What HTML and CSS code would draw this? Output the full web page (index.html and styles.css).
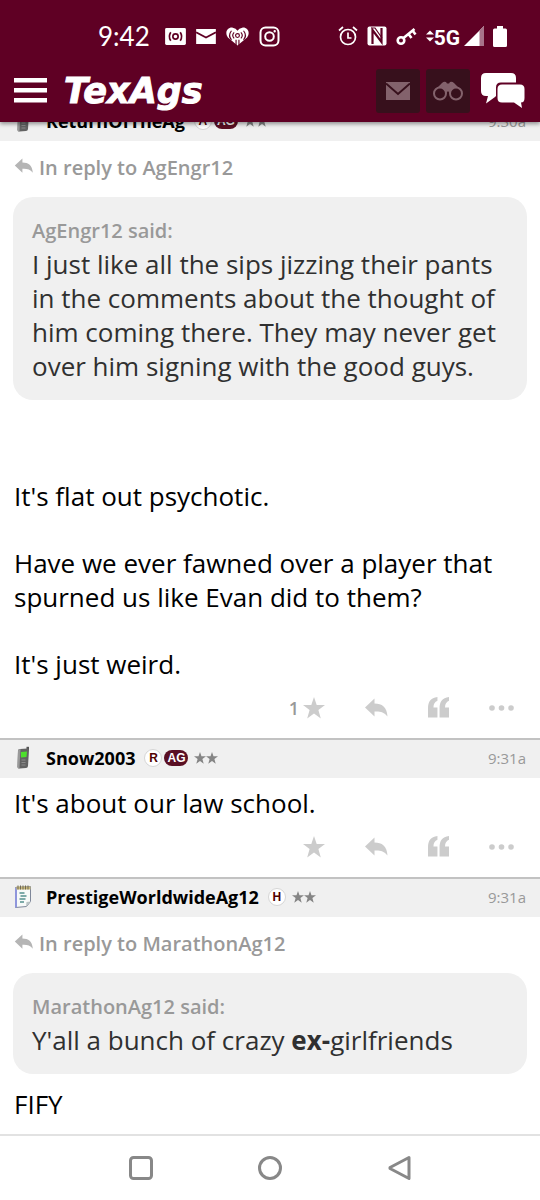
FILE: index.html
```html
<!DOCTYPE html>
<html lang="en">
<head>
<meta charset="utf-8">
<meta name="viewport" content="width=device-width, initial-scale=1">
<title>TexAgs</title>
<link rel="stylesheet" href="styles.css">
</head>
<body>
<svg class="sprite" aria-hidden="true">
  <symbol id="i-star" viewBox="0 0 22 22"><path d="M11 0l2.700 8H22l-6.600 5 2.400 8.500L11 16.500l-6.800 5L6.600 13 0 8h8.300z"/></symbol>
  <symbol id="i-reply" viewBox="0 0 23 20"><path d="M0 9.500L9.500 .5v5C17 5.500 22 9 22.500 18.500 19 14 15 13.200 9.500 13.500v5z"/></symbol>
  <symbol id="i-quote" viewBox="0 0 20 20"><path d="M9 0v3.500C6.500 4.500 5.200 6.500 5.200 10H9V19.500H0V11C0 4.500 2.500.8 9 0zM20 0v3.500c-2.500 1-3.800 3-3.800 6.500H20v9.500h-9V11C11 4.500 13.500.8 20 0z"/></symbol>
  <symbol id="i-dots" viewBox="0 0 25 6"><circle cx="3" cy="3" r="2.800"/><circle cx="12.500" cy="3" r="2.800"/><circle cx="22" cy="3" r="2.800"/></symbol>
  <symbol id="i-phone" viewBox="0 0 20 24">
    <path d="M12.500 4V.8h2.500V4z" fill="#555"/><path d="M4 4.500Q4 3 6 3l7.500-.5q1.500 0 1.500 1.500L14 20q-.2 2-2 2L5.500 22.500Q3.500 22.500 3.500 21z" fill="#626262"/><path d="M4 4.500L3.500 21q0 1.500 2 1.500L6.500 3Q4 3 4 4.500z" fill="#999"/><path d="M7 6l6-.5-.5 5.500-5.500.5z" fill="#4de02b"/><path d="M7.500 14h4M7.500 16.500h4M7.500 19h4" stroke="#8a8a8a" stroke-width="1"/>
  </symbol>
  <symbol id="i-note" viewBox="0 0 20 24">
    <path d="M1.500 2.500l15-1v15l-4 5-11 1z" fill="#f7faf9" stroke="#7f8799" stroke-width="1"/><path d="M1 3l2-.5v20H1z" fill="#8f96dc"/><path d="M2.500 1.500h14v3h-14z" fill="#c8b878"/><path d="M4 .5v4M6.500 .5v4M9 .5v4M11.500 .5v4M14 .5v4" stroke="#6e6858" stroke-width="1"/><path d="M5.500 8h5M6.500 11h6M5.500 14h6M6 17h4" stroke="#56918f" stroke-width="1.400"/><path d="M12 22l.5-5 4-.5z" fill="#b9c4c4"/>
  </symbol>
</svg>

<header class="top">
  <div class="status">
    <span class="clock">9:42</span>
    <span class="status-left">
      <svg width="21" height="17" viewBox="0 0 22 18"><rect width="22" height="18" rx="1.500" fill="#fff"/><g fill="none" stroke="#5f0024" stroke-width="1.800"><circle cx="11" cy="9" r="2.800"/><path d="M6 4.500q-3 4.500 0 9M16 4.500q3 4.500 0 9"/></g></svg>
      <svg width="20" height="15" viewBox="0 0 21 16"><path d="M0 0h21v16H0z" fill="#fff"/><path d="M0 3.500l10.500 5.500L21 3.500" fill="none" stroke="#5f0024" stroke-width="1.800"/></svg>
      <svg width="23" height="19" viewBox="0 0 24 19"><path d="M12 19L2 10.500C-2 5 2-.5 7 .3q3.500.5 5 3.200Q13.500.8 17 .3c5-.8 9 4.700 5 10.200z" fill="#fff"/><g fill="none" stroke="#5f0024" stroke-width="1.200"><path d="M8.500 5.200q-3 3 0 6.300M15.500 5.200q3 3 0 6.300M5.700 3.500q-4 5 0 9.500M18.300 3.500q4 5 0 9.500M10.500 19v-6M13.500 19v-6"/><circle cx="12" cy="8.500" r="2"/></g></svg>
      <svg width="21" height="21" viewBox="0 0 21 21" fill="none" stroke="#fff" stroke-width="2"><rect x="1.500" y="1.500" width="18" height="18" rx="5"/><circle cx="10.500" cy="10.500" r="4.300"/><circle cx="15.700" cy="5.300" r=".6" stroke-width="1.200"/></svg>
    </span>
    <span class="status-right">
      <svg width="20" height="20" viewBox="0 0 20 20" fill="none" stroke="#fff" stroke-width="1.700"><circle cx="10" cy="11" r="7.500"/><path d="M10 6.500V12h3.500M1 4.500L5 1M19 4.500L15 1"/></svg>
      <svg width="20" height="20" viewBox="0 0 20 20"><rect x=".5" y=".5" width="19" height="19" rx="2" fill="#fff"/><path d="M5.500 18V4l9 12V2" fill="none" stroke="#5f0024" stroke-width="2.200"/><path d="M4.500 2h3.500l7 10" fill="none" stroke="#5f0024" stroke-width="1.200"/></svg>
      <svg width="21" height="19" viewBox="0 0 21 19" fill="none" stroke="#fff" stroke-width="2.600"><circle cx="5" cy="13.500" r="3.300"/><path d="M7.500 11L18.500 2M12.500 7l3 4M16.500 3.500l3 4"/></svg>
      <span class="network">
        <svg width="8" height="12" viewBox="0 0 8 12" fill="#fff"><path d="M0 4.500L4 .5l4 4zM0 7.500l4 4 4-4z"/></svg>
        <span>5G</span>
        <svg class="signal" width="20" height="20" viewBox="0 0 20 20"><path d="M0 20L20 0v20z" fill="#fff"/><path d="M15.500 4.500L20 0v20h-4.500z" fill="#a8738a"/></svg>
      </span>
      <svg width="14" height="21" viewBox="0 0 14 21"><path d="M4 0h6v2.500h2.500q1.500 0 1.500 1.500v15.500q0 1.500-1.500 1.500h-11Q0 21 0 19.500V4q0-1.500 1.500-1.500H4z" fill="#fff"/></svg>
    </span>
  </div>
  <div class="appbar">
    <button class="plain" aria-label="Menu"><svg width="34" height="26" viewBox="0 0 34 26" fill="#fff"><path d="M0 0h33v4.500H0zM0 10h33v4.500H0zM0 20h33v4.500H0z"/></svg></button>
    <a class="logo" href="#">TexAgs</a>
    <nav class="tools">
      <button class="tile" aria-label="Messages"><svg width="24" height="18" viewBox="0 0 24 18"><path d="M0 0h24v18H0z" fill="#83626c"/><path d="M0 1.500l12 10.500 12-10.500" fill="none" stroke="#37101c" stroke-width="2"/></svg></button>
      <button class="tile" aria-label="Watch list"><svg width="30" height="20" viewBox="0 0 30 20"><path d="M2 9L9 2q2-2 4-1l1 1.500h2L17 1q2-1 4 1l7 7-6 5h-4l-3-4-3 4H8z" fill="#83626c"/><g fill="#37101c" stroke="#83626c" stroke-width="2"><circle cx="7" cy="12.500" r="6"/><circle cx="23" cy="12.500" r="6"/></g></svg></button>
      <button class="plain" aria-label="Forums"><svg width="44" height="36" viewBox="0 0 44 36" fill="#fff"><path d="M5 0h25q5 0 5 5v4.500H20q-5 0-5 5V23l-1 1-9 6.500L7 23H5q-5 0-5-5V5q0-5 5-5z"/><path d="M21 11.500h18q4.500 0 4.500 4.500v9q0 4.500-3.500 4.500l1 5.500-8-5.500H21q-4.500 0-4.500-4.500v-9q0-4.500 4.500-4.500z"/></svg></button>
    </nav>
  </div>
</header>

<main class="feed">
  <article>
    <div class="post-head">
      <svg class="avatar"><use href="#i-phone"/></svg>
      <a class="name" href="#">ReturnOfTheAg</a>
      <span class="badge">A</span><span class="badge ag">AG</span>
      <span class="rank"><svg><use href="#i-star"/></svg><svg><use href="#i-star"/></svg></span>
      <time>9:30a</time>
    </div>
    <a class="reply-to" href="#"><svg><use href="#i-reply"/></svg>In reply to AgEngr12</a>
    <blockquote>
      <cite>AgEngr12 said:</cite>
      <p>I just like all the sips jizzing their pants in the comments about the thought of him coming there. They may never get over him signing with the good guys.</p>
    </blockquote>
    <div class="text spaced">
      <p>It's flat out psychotic.</p>
      <p>Have we ever fawned over a player that spurned us like Evan did to them?</p>
      <p>It's just weird.</p>
    </div>
    <div class="actions">
      <button class="plain" aria-label="Star, 1"><span class="count">1</span><svg width="22" height="22"><use href="#i-star"/></svg></button>
      <button class="plain" aria-label="Reply"><svg width="23" height="20"><use href="#i-reply"/></svg></button>
      <button class="plain" aria-label="Quote"><svg width="21" height="21"><use href="#i-quote"/></svg></button>
      <button class="plain" aria-label="More"><svg width="25" height="6"><use href="#i-dots"/></svg></button>
    </div>
  </article>

  <article>
    <div class="post-head">
      <svg class="avatar"><use href="#i-phone"/></svg>
      <a class="name" href="#">Snow2003</a>
      <span class="badge">R</span><span class="badge ag">AG</span>
      <span class="rank"><svg><use href="#i-star"/></svg><svg><use href="#i-star"/></svg></span>
      <time>9:31a</time>
    </div>
    <div class="text"><p>It's about our law school.</p></div>
    <div class="actions">
      <button class="plain" aria-label="Star"><svg width="22" height="22"><use href="#i-star"/></svg></button>
      <button class="plain" aria-label="Reply"><svg width="23" height="20"><use href="#i-reply"/></svg></button>
      <button class="plain" aria-label="Quote"><svg width="21" height="21"><use href="#i-quote"/></svg></button>
      <button class="plain" aria-label="More"><svg width="25" height="6"><use href="#i-dots"/></svg></button>
    </div>
  </article>

  <article>
    <div class="post-head">
      <svg class="avatar"><use href="#i-note"/></svg>
      <a class="name" href="#">PrestigeWorldwideAg12</a>
      <span class="badge">H</span>
      <span class="rank"><svg><use href="#i-star"/></svg><svg><use href="#i-star"/></svg></span>
      <time>9:31a</time>
    </div>
    <a class="reply-to" href="#"><svg><use href="#i-reply"/></svg>In reply to MarathonAg12</a>
    <blockquote>
      <cite>MarathonAg12 said:</cite>
      <p>Y'all a bunch of crazy <b>ex-</b>girlfriends</p>
    </blockquote>
    <div class="text after-quote"><p>FIFY</p></div>
  </article>
</main>

<nav class="system">
  <button class="plain" aria-label="Recent apps"><svg width="26" height="26" viewBox="0 0 26 26"><rect x="2.500" y="2.500" width="21" height="21" rx="3"/></svg></button>
  <button class="plain" aria-label="Home"><svg width="26" height="26" viewBox="0 0 26 26"><circle cx="13" cy="13" r="10.500"/></svg></button>
  <button class="plain" aria-label="Back"><svg width="26" height="26" viewBox="0 0 26 26"><path d="M4 12.500v1L23 23.500V2.500z" stroke-linejoin="round"/></svg></button>
</nav>
</body>
</html>
```
FILE: styles.css
```css
* {
  box-sizing: border-box;
}

body {
  margin: 0;
  min-height: 100vh;
  display: flex;
  flex-direction: column;
  background: #fff;
  color: #000;
  font-family: "Open Sans", "Noto Sans", sans-serif;
}

p,
blockquote {
  margin: 0;
}

a {
  color: inherit;
  text-decoration: none;
}

svg {
  display: block;
  flex: none;
}

.sprite {
  position: absolute;
  width: 0;
  height: 0;
}

.plain {
  display: flex;
  align-items: center;
  padding: 0;
  border: 0;
  background: none;
  color: inherit;
  font: inherit;
}

/* Header */
.top {
  position: sticky;
  top: 0;
  z-index: 2;
  background: #5f0024;
  color: #fff;
  box-shadow: 0 2px 4px rgba(0, 0, 0, 0.4);
}

.status {
  display: flex;
  align-items: center;
  height: 62px;
  padding: 10px 33px 0 98px;
}

.clock {
  font: 26px/32px Lato, sans-serif;
}

.status-left {
  display: flex;
  align-items: center;
  gap: 10px;
  margin-left: 15px;
}

.status-right {
  display: flex;
  align-items: center;
  gap: 9px;
  margin-left: auto;
}

.network {
  display: flex;
  align-items: center;
  font: bold 21px/24px Roboto, sans-serif;
}

.network span {
  padding-top: 4px;
}

.signal {
  margin-left: 4px;
}

.appbar {
  display: flex;
  align-items: center;
  height: 60px;
  padding: 0 15px 2px 14px;
}

.logo {
  margin-left: 16px;
  font: italic bold 35px/40px "DejaVu Sans", sans-serif;
  -webkit-text-stroke: 1px #fff;
}

.tools {
  display: flex;
  align-items: center;
  gap: 6px;
  margin-left: auto;
}

.tools .plain {
  margin-left: 5px;
}

.tile {
  display: flex;
  align-items: center;
  justify-content: center;
  width: 44px;
  height: 44px;
  padding: 0;
  border: 0;
  border-radius: 3px;
  background: #37101c;
}

/* Posts */
.feed {
  flex: 1;
  margin-top: -21px;
}

.post-head {
  display: flex;
  align-items: center;
  height: 40px;
  padding: 0 14px 2px;
  border-top: 2px solid #c2c2c2;
  background: #f0f0f0;
}

.avatar {
  width: 20px;
  height: 24px;
  margin-right: 12px;
}

.name {
  margin-right: 9px;
  font-size: 18px;
  font-weight: 700;
}

.badge {
  min-width: 18px;
  height: 18px;
  margin-right: 2px;
  border: 1px solid #d5d5d5;
  border-radius: 9px;
  background: #fff;
  color: #500000;
  font: bold 12px/16px "Liberation Sans", sans-serif;
  text-align: center;
}

.badge.ag {
  width: 24px;
  height: 16px;
  border: 0;
  background: #5a0f23;
  color: #fff;
}

.rank {
  display: flex;
  margin-left: 4px;
  fill: #858585;
}

.rank svg {
  width: 12px;
  height: 12px;
}

time {
  margin-left: auto;
  color: #999;
  font-size: 15px;
}

.reply-to {
  display: flex;
  align-items: center;
  height: 56px;
  padding: 0 14px 3px;
  color: #999;
  font-size: 20px;
  font-weight: 600;
}

.reply-to svg {
  width: 20px;
  height: 16px;
  margin: 0 5px 4px 0;
  fill: #b5b5b5;
}

blockquote {
  margin: 0 13px;
  padding: 20px 18px 17px 19px;
  border-radius: 20px;
  background: #f0f0f0;
  color: #303030;
}

cite {
  display: block;
  margin-bottom: 2px;
  color: #999;
  font-size: 20px;
  font-style: normal;
  font-weight: 600;
  line-height: 28px;
}

.text,
blockquote p {
  font-size: 26px;
  line-height: 34px;
}

.text {
  display: grid;
  gap: 33px;
  padding: 8px 14px 0;
}

.text.spaced {
  padding-top: 79px;
}

.text.after-quote {
  padding-top: 13px;
}

.actions {
  display: flex;
  align-items: center;
  justify-content: flex-end;
  gap: 40px;
  height: 57px;
  padding: 0 26px 4px 13px;
  fill: #ccc;
}

.count {
  margin-right: 4px;
  color: #999;
  font-size: 18px;
  font-weight: 600;
}

/* System navigation */
.system {
  position: sticky;
  bottom: 0;
  display: flex;
  justify-content: center;
  gap: 19vw;
  height: 66px;
  border-top: 2px solid #e2e2e2;
  background: #fff;
  fill: none;
  stroke: #888;
  stroke-width: 3;
}
```
